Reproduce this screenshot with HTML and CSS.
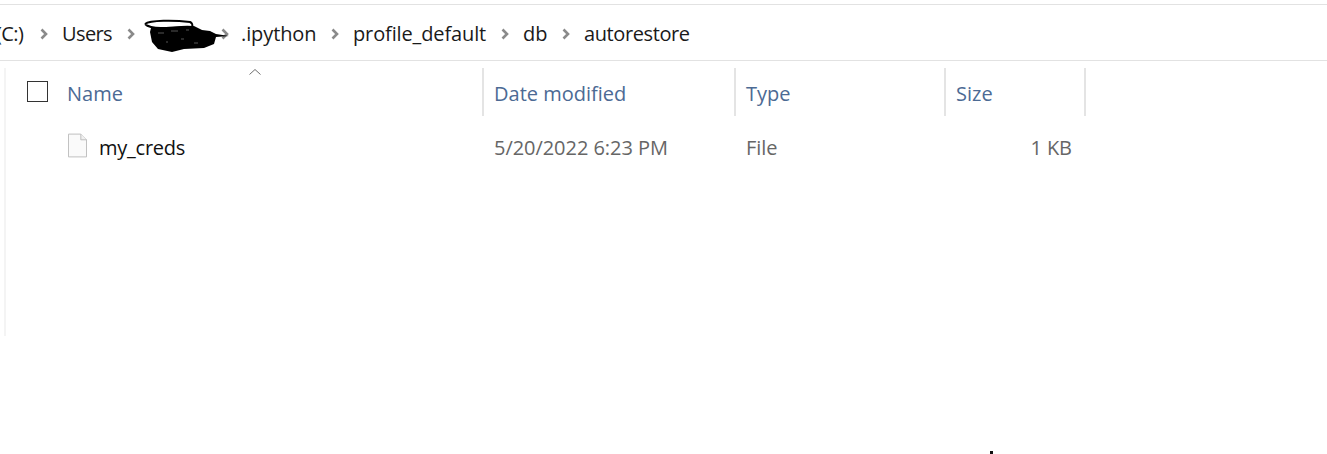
FILE: index.html
```html
<!DOCTYPE html>
<html lang="en">
<head>
    <meta charset="UTF-8">
    <meta name="viewport" content="width=device-width, initial-scale=1.0">
    <title>autorestore</title>
    <link rel="stylesheet" href="styles.css">
</head>
<body>
    <nav class="crumbs">
        <span class="crumb c-drive">(C:)</span>
        <svg class="chev" viewBox="0 0 8 12"><path d="M1.500 1.500 6 6l-4.500 4.500"/></svg>
        <span class="crumb c-users">Users</span>
        <svg class="chev" viewBox="0 0 8 12"><path d="M1.500 1.500 6 6l-4.500 4.500"/></svg>
        <span class="crumb c-hidden"></span>
        <svg class="chev" viewBox="0 0 8 12"><path d="M1.500 1.500 6 6l-4.500 4.500"/></svg>
        <span class="crumb c-ipython">.ipython</span>
        <svg class="chev" viewBox="0 0 8 12"><path d="M1.500 1.500 6 6l-4.500 4.500"/></svg>
        <span class="crumb c-profile">profile_default</span>
        <svg class="chev" viewBox="0 0 8 12"><path d="M1.500 1.500 6 6l-4.500 4.500"/></svg>
        <span class="crumb c-db">db</span>
        <svg class="chev" viewBox="0 0 8 12"><path d="M1.500 1.500 6 6l-4.500 4.500"/></svg>
        <span class="crumb c-last">autorestore</span>
    </nav>

    <!-- scribble over the user name -->
    <svg class="scribble" viewBox="0 0 86 34">
        <path class="ink" d="M7 10 50 8l8 4 8 1 6 3 13 2-13 1-2 7-10 4-20 1-12 3-14-3-6-7-2-10Z"/>
        <path class="ink-line" d="M1 6C6 2 30 2 46 4c2 1 3 3 2 5M1 6c3 3 10 4 16 4 10 0 22-2 32-1"/>
        <path class="ink-gap" d="M14 15h6M27 13h7M37 21h3M50 25h4M22 24h2M42 12h3"/>
    </svg>

    <section class="files">
        <svg class="sort" viewBox="0 0 12 6"><path d="M.5 5.500 6 .5l5.500 5"/></svg>
        <div class="row head">
            <div class="cell name">
                <span class="check"></span>
                <span>Name</span>
            </div>
            <div class="cell date">Date modified</div>
            <div class="cell type">Type</div>
            <div class="cell size">Size</div>
        </div>
        <div class="row item">
            <div class="cell name">
                <svg class="doc" viewBox="0 0 20 25">
                    <path d="M.5.5h13l6 6v18H.5Z" fill="#fafafa" stroke="#bdbdbd"/>
                    <path d="M13.500.5v6h6" fill="#f0f0f0" stroke="#bdbdbd"/>
                </svg>
                <span class="fname">my_creds</span>
            </div>
            <div class="cell date">5/20/2022 6:23 PM</div>
            <div class="cell type">File</div>
            <div class="cell size">1 KB</div>
        </div>
    </section>

    <span class="speck"></span>
</body>
</html>
```

FILE: styles.css
```css
body {
    margin: 0;
    height: 454px;
    overflow: hidden;
    background: #fff;
    font-family: "Open Sans", "Noto Sans", sans-serif;
    position: relative;
}

/* address bar */
.crumbs {
    margin-top: 4px;
    height: 53px;
    padding-top: 2px;
    border-top: 1px solid #e2e2e2;
    border-bottom: 1px solid #e2e2e2;
    display: flex;
    align-items: center;
    font-size: 20px;
    color: #1a1a1a;
    white-space: nowrap;
    overflow: hidden;
}
.crumb {letter-spacing: -.6px;}
.c-drive {margin-left: -4px; width: 30px;}
.c-users {width: 51px;}
.c-hidden {width: 58px;}
.c-ipython {width: 76px; margin-left: -2px; letter-spacing: -.1px;}
.c-profile {width: 134px; letter-spacing: -.13px;}
.c-db {width: 25px; letter-spacing: -.1px;}
.c-last {letter-spacing: -.4px;}
.chev {
    width: 8px; height: 12px;
    margin: 0 14px;
    flex: none;
}
.chev path {fill: none; stroke: #8a8a8a; stroke-width: 2.6;}

.scribble {
    position: absolute;
    left: 144px; top: 18px;
    width: 86px; height: 34px;
}
.ink {fill: #000;}
.ink-line {fill: none; stroke: #000; stroke-width: 2;}
.ink-gap {fill: none; stroke: #555; stroke-width: 1;}

/* file list */
.files {
    position: relative;
    margin: 7px 0 0 4px;
    height: 268px;
    border-left: 2px solid #f4f4f4;
    font-size: 20px;
}
.sort {
    position: absolute;
    left: 243px; top: 1px;
    width: 12px; height: 6px;
}
.sort path {fill: none; stroke: #6e6e6e; stroke-width: 1;}

.row {
    display: grid;
    grid-template-columns: 476px 252px 210px 142px;
}
.cell {display: flex; align-items: center;}
.head {height: 48px;}
.head .cell {color: #4c6a94; letter-spacing: 0; padding-top: 2px;}
.head .date, .head .type, .head .size {
    border-left: 2px solid #e4e4e4;
    padding-left: 10px;
}
.head .size {border-right: 2px solid #e4e4e4;}
.check {
    width: 19px; height: 19px;
    border: 1px solid #333;
    margin: -4px 19px 0 21px;
}
.item {height: 62px; color: #666; letter-spacing: -.05px;}
.item .date, .item .type {padding-left: 12px;}
.item .size {justify-content: flex-end; padding-right: 14px;}
.doc {width: 19px; height: 25px; margin: -4px 12px 0 62px; flex: none;}
.fname {color: #111; letter-spacing: -.25px;}

.speck {
    position: absolute;
    left: 990px; top: 451px;
    width: 3px; height: 3px;
    background: #111;
}
```
